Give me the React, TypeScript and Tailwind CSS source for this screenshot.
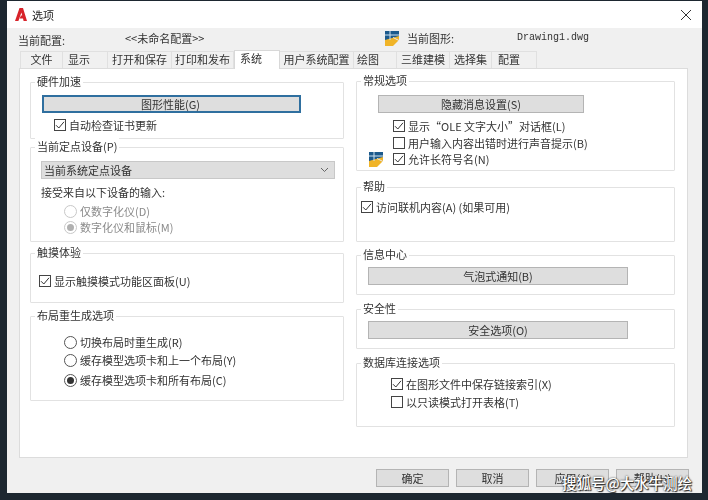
import React from "react";

const Check = ({ on = false, className = "" }: { on?: boolean; className?: string }) => (
  <span className={`w-[12px] h-[12px] shrink-0 border border-[#444] bg-white flex items-center justify-center ${className}`}>
    {on && (
      <svg width="10" height="10" viewBox="0 0 10 10" fill="none" stroke="#333" strokeWidth="1">
        <path d="M1 5.2 L3.8 8 L9 1.8" />
      </svg>
    )}
  </span>
);

const CheckRow = ({ on, label, className = "" }: { on?: boolean; label: string; className?: string }) => (
  <div className={`flex items-center h-[16px] gap-[3px] ${className}`}>
    <Check on={on} />
    <span>{label}</span>
  </div>
);

const Radio = ({ on, label, disabled, className = "" }: { on?: boolean; label: string; disabled?: boolean; className?: string }) => (
  <div className={`flex items-center h-[16px] gap-[3px] ${disabled ? "text-[#8a8a8a]" : ""} ${className}`}>
    <span className={`w-[13px] h-[13px] rounded-full border flex items-center justify-center bg-white ${disabled ? "border-[#c8c8c8]" : "border-[#555]"}`}>
      {on && <span className={`w-[7px] h-[7px] rounded-full ${disabled ? "bg-[#b0b0b0]" : "bg-[#333]"}`} />}
    </span>
    <span>{label}</span>
  </div>
);

const Group = ({ title, className = "", children }: { title: string; className?: string; children?: React.ReactNode }) => (
  <div className={`relative border border-[#e2e2e2] rounded-[1px] ${className}`}>
    <span className="absolute -top-[10px] left-[4px] bg-white px-[2px] leading-[16px] text-[#333]">{title}</span>
    {children}
  </div>
);

const Btn = ({ label, focus, className = "" }: { label: string; focus?: boolean; className?: string }) => (
  <div className={`h-[18px] bg-[#dedede] flex items-center justify-center text-[#333] ${focus ? "border-2 border-[#2f6f9f]" : "border border-[#b4b4b4]"} ${className}`}>
    {label}
  </div>
);

const Tab = ({ label, className = "" }: { label: string; className?: string }) => (
  <div className={`h-[17px] mt-[1px] pb-[2px] bg-[#f0f0f0] border-t border-r border-[#e0e0e0] flex items-center justify-center text-[#333] ${className}`}>
    {label}
  </div>
);

const Emblem = ({ className = "" }: { className?: string }) => (
  <svg className={className} width="14" height="15" viewBox="0 0 14 15">
    <rect x="0" y="0" width="14" height="9" fill="#1c5a8c" />
    <path d="M0 9 L14 5 L14 9 L8 15 L0 15 Z" fill="#f0b428" />
    <path d="M0 4 H14 M5 0 V9" stroke="#cfe2f0" strokeWidth="1" />
    <path d="M8 6 L14 9 L14 10 L8 7 Z" fill="#e8e8e8" />
  </svg>
);

export default function App() {
  return (
    <div className="w-[708px] h-[500px] bg-[#1d2730] pt-[1px] pl-[7px] overflow-hidden relative text-[11px] leading-[16px] text-[#333] [font-family:'Noto_Sans_CJK_SC','Liberation_Sans',sans-serif]">
      <div className="w-[695px] h-[492px] bg-[#f0f0f0] flex flex-col blur-[0.3px]">
        {/* Title bar */}
        <div className="h-[27px] bg-white flex items-center pl-[8px] pr-[10px] shrink-0">
          <svg width="12" height="13" viewBox="0 0 12 13" className="mr-[5px]">
            <path d="M0 13 L4.5 0 H8 L12 13 H8.6 L8 10.6 H4.6 L6 7.6 H7.2 L6.4 4.4 L3.4 13 Z" fill="#d8232a" />
          </svg>
          <span className="text-[#222] text-[11px]">选项</span>
          <svg width="12" height="12" viewBox="0 0 12 12" className="ml-auto" stroke="#333" strokeWidth="1">
            <path d="M1 1 L11 11 M11 1 L1 11" />
          </svg>
        </div>

        {/* Profile row */}
        <div className="h-[22px] flex items-center pl-[11px] shrink-0">
          <span className="w-[107px] mt-[1px]">当前配置:</span>
          <span className="w-[260px] -mt-[2px]">&lt;&lt;未命名配置&gt;&gt;</span>
          <Emblem className="-mt-[2px]" />
          <span className="w-[110px] ml-[8px] -mt-[2px]">当前图形:</span>
          <span className="-mt-[2px] text-[10px] [font-family:'Liberation_Mono',monospace]">Drawing1.dwg</span>
        </div>

        {/* Tabs */}
        <div className="h-[18px] flex items-end pl-[13px] shrink-0">
          <Tab label="文件" className="w-[43px] border-l" />
          <Tab label="显示" className="w-[45px] !justify-start pl-[5px]" />
          <Tab label="打开和保存" className="w-[64px]" />
          <Tab label="打印和发布" className="w-[62px]" />
          <div className="h-[19px] w-[46px] bg-white border-t border-x border-[#d8d8d8] flex items-center pl-[5px] -mb-px z-10 pb-[4px]">系统</div>
          <Tab label="用户系统配置" className="w-[74px]" />
          <Tab label="绘图" className="w-[43px] !justify-start pl-[3px]" />
          <Tab label="三维建模" className="w-[53px]" />
          <Tab label="选择集" className="w-[42px]" />
          <Tab label="配置" className="w-[45px] !justify-start pl-[6px]" />
        </div>

        {/* Panel */}
        <div className="ml-[12px] w-[669px] h-[390px] bg-white border border-[#dcdcdc] flex gap-[12px] pl-[10px] shrink-0">
          {/* Left column */}
          <div className="w-[314px] flex flex-col pt-[13px]">
            <Group title="硬件加速" className="h-[57px] pl-[11px] pt-[12px]">
              <Btn focus label="图形性能(G)" className="w-[259px] pr-[2px]" />
              <CheckRow on label="自动检查证书更新" className="ml-[12px] mt-[4px]" />
            </Group>
            <Group title="当前定点设备(P)" className="h-[95px] mt-[8px] pl-[10px] pt-[13px]">
              <div className="w-[294px] h-[18px] bg-[#dedede] border border-[#c8c8c8] flex items-center justify-between pl-[2px] pr-[5px]">
                <span>当前系统定点设备</span>
                <svg width="9" height="6" viewBox="0 0 9 6" fill="none" stroke="#666" strokeWidth="1">
                  <path d="M1 1 L4.5 4.5 L8 1" />
                </svg>
              </div>
              <div className="mt-[5px]">接受来自以下设备的输入:</div>
              <Radio disabled label="仅数字化仪(D)" className="ml-[23px] mt-[3px]" />
              <Radio disabled on label="数字化仪和鼠标(M)" className="ml-[23px]" />
            </Group>
            <Group title="触摸体验" className="h-[50px] mt-[11px] pl-[8px] pt-[19px]">
              <CheckRow on label="显示触摸模式功能区面板(U)" />
            </Group>
            <Group title="布局重生成选项" className="h-[85px] mt-[13px] pl-[33px] pt-[17px]">
              <Radio label="切换布局时重生成(R)" />
              <Radio label="缓存模型选项卡和上一个布局(Y)" className="mt-[2px]" />
              <Radio on label="缓存模型选项卡和所有布局(C)" className="mt-[4px]" />
            </Group>
          </div>

          {/* Right column */}
          <div className="w-[319px] flex flex-col pt-[12px]">
            <Group title="常规选项" className="h-[90px] pl-[21px] pt-[13px]">
              <Btn label="隐藏消息设置(S)" className="w-[206px]" />
              <CheckRow on label="显示“OLE 文字大小”对话框(L)" className="ml-[15px] mt-[5px]" />
              <CheckRow label="用户输入内容出错时进行声音提示(B)" className="ml-[15px] mt-[1px]" />
              <CheckRow on label="允许长符号名(N)" className="ml-[15px]" />
              <Emblem className="absolute left-[12px] top-[70px]" />
            </Group>
            <Group title="帮助" className="h-[55px] mt-[16px] pl-[4px] pt-[11px]">
              <CheckRow on label="访问联机内容(A) (如果可用)" />
            </Group>
            <Group title="信息中心" className="h-[40px] mt-[13px] pl-[11px] pt-[11px]">
              <Btn label="气泡式通知(B)" className="w-[260px]" />
            </Group>
            <Group title="安全性" className="h-[40px] mt-[14px] pl-[11px] pt-[11px]">
              <Btn label="安全选项(O)" className="w-[260px]" />
            </Group>
            <Group title="数据库连接选项" className="h-[64px] mt-[14px] pl-[34px] pt-[12px]">
              <CheckRow on label="在图形文件中保存链接索引(X)" />
              <CheckRow label="以只读模式打开表格(T)" className="mt-[2px]" />
            </Group>
          </div>
        </div>

        {/* Footer buttons */}
        <div className="flex justify-end gap-[7px] pr-[13px] pt-[11px]">
          <Btn label="确定" className="w-[73px]" />
          <Btn label="取消" className="w-[73px]" />
          <Btn label="应用(A)" className="w-[73px]" />
          <Btn label="帮助(H)" className="w-[73px]" />
        </div>
      </div>

      {/* Watermark */}
      <div className="absolute left-[562px] top-[473px] text-[14.5px] leading-[20px] font-medium text-white whitespace-nowrap [text-shadow:0_0_2px_#222,1px_1px_1px_#222]">
        搜狐号@大水牛测绘
      </div>
    </div>
  );
}
